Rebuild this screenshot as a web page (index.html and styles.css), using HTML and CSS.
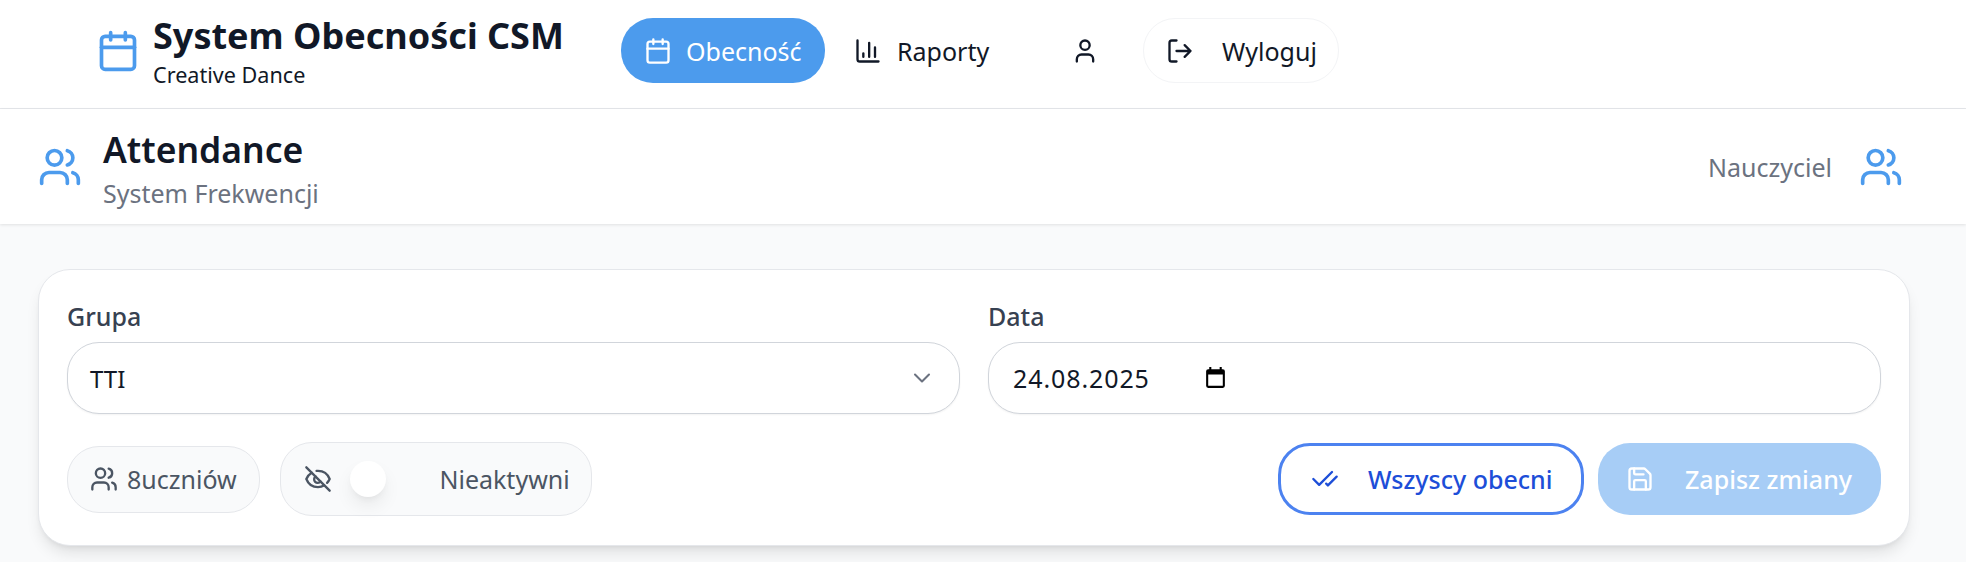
FILE: index.html
```html
<!DOCTYPE html>
<html>
  <head>
    <meta charset="utf-8">
    <title>System Obecności CSM</title>
    <link rel="stylesheet" href="styles.css">
  </head>
  <body>
    <!-- Górna nawigacja -->
    <nav class="navbar">
      <div class="brand">
        <svg class="icon brand-icon" viewBox="0 0 24 24"><path d="M8 2v4M16 2v4"/><rect x="3" y="4" width="18" height="18" rx="2"/><path d="M3 10h18"/></svg>
        <div>
          <div class="brand-title">System Obecności CSM</div>
          <div class="brand-sub">Creative Dance</div>
        </div>
      </div>
      <div class="nav-links">
        <a class="nav-link nav-active">
          <svg class="icon nav-icon" viewBox="0 0 24 24"><path d="M8 2v4M16 2v4"/><rect x="3" y="4" width="18" height="18" rx="2"/><path d="M3 10h18"/></svg>
          Obecność
        </a>
        <a class="nav-link nav-reports">
          <svg class="icon nav-icon" viewBox="0 0 24 24"><path d="M3 3v16a2 2 0 0 0 2 2h16"/><path d="M8 17v-3M13 17V5M18 17V9"/></svg>
          Raporty
        </a>
        <a class="nav-user">
          <svg class="icon nav-icon" viewBox="0 0 24 24"><path d="M19 21v-2a4 4 0 0 0-4-4H9a4 4 0 0 0-4 4v2"/><circle cx="12" cy="7" r="4"/></svg>
        </a>
        <a class="nav-link nav-logout">
          <svg class="icon nav-icon" viewBox="0 0 24 24"><path d="M9 21H5a2 2 0 0 1-2-2V5a2 2 0 0 1 2-2h4"/><path d="M16 17l5-5-5-5M21 12H9"/></svg>
          Wyloguj
        </a>
      </div>
    </nav>

    <!-- Nagłówek strony -->
    <header class="page-header">
      <div class="page-title-group">
        <svg class="icon header-icon" viewBox="0 0 24 24"><path d="M16 21v-2a4 4 0 0 0-4-4H6a4 4 0 0 0-4 4v2"/><circle cx="9" cy="7" r="4"/><path d="M22 21v-2a4 4 0 0 0-3-3.87M16 3.13a4 4 0 0 1 0 7.75"/></svg>
        <div class="page-title-text">
          <h1 class="page-title">Attendance</h1>
          <div class="page-sub">System Frekwencji</div>
        </div>
      </div>
      <div class="role">
        <span>Nauczyciel</span>
        <svg class="icon header-icon" viewBox="0 0 24 24"><path d="M16 21v-2a4 4 0 0 0-4-4H6a4 4 0 0 0-4 4v2"/><circle cx="9" cy="7" r="4"/><path d="M22 21v-2a4 4 0 0 0-3-3.87M16 3.13a4 4 0 0 1 0 7.75"/></svg>
      </div>
    </header>

    <main class="content">
      <section class="card">
        <div class="fields">
          <div class="field">
            <label class="field-label">Grupa</label>
            <div class="field-box field-select">
              <span>TTI</span>
              <svg class="icon chevron" viewBox="0 0 24 24"><path d="M6 9l6 6 6-6"/></svg>
            </div>
          </div>
          <div class="field">
            <label class="field-label">Data</label>
            <div class="field-box field-date">
              <span class="date-value">24.08.2025</span>
              <svg class="date-icon" viewBox="0 0 24 24"><path d="M19 4h-1V2h-2v2H8V2H6v2H5a2 2 0 0 0-2 2v14a2 2 0 0 0 2 2h14a2 2 0 0 0 2-2V6a2 2 0 0 0-2-2zm0 16H5V9h14v11z"/></svg>
            </div>
          </div>
        </div>

        <div class="actions">
          <div class="actions-left">
            <div class="count-pill">
              <svg class="icon pill-icon" viewBox="0 0 24 24"><path d="M16 21v-2a4 4 0 0 0-4-4H6a4 4 0 0 0-4 4v2"/><circle cx="9" cy="7" r="4"/><path d="M22 21v-2a4 4 0 0 0-3-3.87M16 3.13a4 4 0 0 1 0 7.75"/></svg>
              <span>8</span><span>uczniów</span>
            </div>
            <div class="toggle-pill">
              <svg class="icon pill-icon" viewBox="0 0 24 24"><path d="M10.73 5.08A10.4 10.4 0 0 1 12 5c4.5 0 8.3 2.6 10 7a11 11 0 0 1-2.2 3.3"/><path d="M6.6 6.6A11 11 0 0 0 2 12c1.7 4.4 5.5 7 10 7a10.6 10.6 0 0 0 5.4-1.6"/><path d="M9.9 9.9a3 3 0 1 0 4.2 4.2"/><path d="M2 2l20 20"/></svg>
              <span class="toggle-knob"></span>
              <span class="toggle-label">Nieaktywni</span>
            </div>
          </div>
          <div class="actions-right">
            <button class="btn btn-outline">
              <svg class="icon btn-icon" viewBox="0 0 24 24"><path d="M18 6L7 17l-5-5"/><path d="M22 10l-7.5 7.5L13 16"/></svg>
              Wszyscy obecni
            </button>
            <button class="btn btn-save">
              <svg class="icon btn-icon" viewBox="0 0 24 24"><path d="M15.2 3a2 2 0 0 1 1.4.6l3.8 3.8a2 2 0 0 1 .6 1.4V19a2 2 0 0 1-2 2H5a2 2 0 0 1-2-2V5a2 2 0 0 1 2-2z"/><path d="M17 21v-7a1 1 0 0 0-1-1H8a1 1 0 0 0-1 1v7"/><path d="M7 3v4a1 1 0 0 0 1 1h7"/></svg>
              Zapisz zmiany
            </button>
          </div>
        </div>
      </section>
    </main>
  </body>
</html>
```

FILE: styles.css
```css
* {
  box-sizing: border-box;
}

html,
body {
  margin: 0;
  padding: 0;
  height: 100%;
}

body {
  font-family: "Noto Sans", sans-serif;
  background-color: #f9fafb;
  color: #111827;
  overflow: hidden;
}

.icon {
  fill: none;
  stroke: currentColor;
  stroke-width: 2;
  stroke-linecap: round;
  stroke-linejoin: round;
  flex-shrink: 0;
}

/* Nawigacja */
.navbar {
  display: flex;
  align-items: center;
  height: 109px;
  padding-left: 96px;
  background-color: #fff;
  border-bottom: 1px solid #e5e7eb;
}

.brand {
  display: flex;
  align-items: center;
  gap: 13px;
  width: 525px;
}

.brand-icon {
  width: 44px;
  height: 44px;
  margin-top: -6px;
  color: #4c9bed;
}

.brand-title {
  font-size: 36px;
  line-height: 44px;
  font-weight: 700;
  margin-top: -4px;
}

.brand-sub {
  font-size: 21.6px;
  line-height: 32px;
  margin-top: 1px;
}

.nav-links {
  display: flex;
  align-items: center;
  margin-top: -7px;
}

.nav-link {
  display: flex;
  align-items: center;
  gap: 14px;
  height: 65px;
  font-size: 25px;
  border-radius: 32px;
}

.nav-icon {
  width: 28px;
  height: 28px;
}

.nav-active {
  width: 204px;
  padding-left: 23px;
  background-color: #4c9bed;
  color: #fff;
}

.nav-reports {
  width: 204px;
  padding-left: 29px;
  gap: 15px;
}

.nav-user {
  display: flex;
  width: 114px;
  padding-left: 42px;
}

.nav-logout {
  width: 196px;
  padding-left: 22px;
  gap: 28px;
  border: 1px solid #f3f4f6;
}

/* Nagłówek strony */
.page-header {
  display: flex;
  align-items: center;
  justify-content: space-between;
  height: 115px;
  padding: 0 63px 0 38px;
  background-color: #fff;
  box-shadow: 0 1px 3px rgba(0, 0, 0, 0.1);
}

.page-title-group {
  display: flex;
  align-items: center;
  gap: 21px;
}

.page-title-text {
  padding-top: 7px;
}

.header-icon {
  width: 44px;
  height: 44px;
  color: #4c9bed;
}

.page-title {
  margin: 0;
  font-size: 35.5px;
  line-height: 46px;
  font-weight: 600;
}

.page-sub {
  font-size: 25px;
  line-height: 43px;
  color: #6b7280;
}

.role {
  display: flex;
  align-items: center;
  gap: 27px;
  font-size: 25px;
  color: #6b7280;
}

/* Karta */
.content {
  padding: 45px 56px 0 38px;
}

.card {
  height: 277px;
  padding: 28px 28px 0 28px;
  background-color: #fff;
  border: 1px solid #e5e7eb;
  border-radius: 32px;
  box-shadow: 0 10px 15px -3px rgba(0, 0, 0, 0.1), 0 4px 6px -4px rgba(0, 0, 0, 0.1);
}

.fields {
  display: grid;
  grid-template-columns: 1fr 1fr;
  gap: 28px;
}

.field-label {
  display: block;
  margin-bottom: 8px;
  font-size: 25px;
  line-height: 36px;
  font-weight: 500;
  color: #374151;
}

.field-box {
  display: flex;
  align-items: center;
  height: 72px;
  font-size: 25px;
  background-color: #fff;
  border: 1px solid #d1d5db;
  border-radius: 32px;
  box-shadow: 0 1px 2px rgba(0, 0, 0, 0.05);
}

.field-select {
  justify-content: space-between;
  padding: 0 23px 0 22px;
  font-size: 24px;
}

.field-date {
  padding: 0 24px;
}

.chevron {
  width: 28px;
  height: 28px;
  stroke-width: 1.75;
  color: #6b7280;
}

.date-value {
  letter-spacing: 0.9px;
}

.date-icon {
  width: 25px;
  height: 25px;
  margin-left: 53px;
  margin-top: -2px;
  fill: #000;
}

.actions {
  display: flex;
  align-items: center;
  justify-content: space-between;
  margin-top: 28px;
}

.actions-left,
.actions-right {
  display: flex;
  align-items: center;
}

.actions-left {
  gap: 20px;
}

.actions-right {
  gap: 14px;
}

.count-pill {
  display: flex;
  align-items: center;
  height: 67px;
  padding: 0 22px;
  font-size: 25px;
  color: #4b5563;
  background-color: #f9fafb;
  border: 1px solid #e5e7eb;
  border-radius: 32px;
}

.pill-icon {
  width: 28px;
  height: 28px;
  margin-right: 9px;
}

.toggle-pill {
  display: flex;
  align-items: center;
  width: 312px;
  height: 74px;
  padding: 0 21px 0 23px;
  font-size: 25px;
  color: #4b5563;
  background-color: #f9fafb;
  border: 1px solid #e5e7eb;
  border-radius: 32px;
}

.toggle-knob {
  width: 36px;
  height: 36px;
  margin-left: 9px;
  background-color: #fff;
  border-radius: 50%;
  box-shadow: 0 10px 20px -3px rgba(0, 0, 0, 0.09), 0 4px 8px -4px rgba(0, 0, 0, 0.08);
}

.toggle-label {
  margin-left: auto;
}

.btn {
  display: flex;
  align-items: center;
  height: 72px;
  font-family: inherit;
  font-size: 25px;
  font-weight: 500;
  border-radius: 32px;
  cursor: pointer;
}

.btn-icon {
  width: 28px;
  height: 28px;
}

.btn-outline {
  width: 306px;
  padding: 0 0 0 30px;
  gap: 29px;
  color: #1d4ed8;
  background-color: #fff;
  border: 3px solid #4c82f0;
}

.btn-save {
  width: 283px;
  padding: 0 0 0 28px;
  gap: 31px;
  color: #fff;
  background-color: #a7cdf6;
  border: none;
}
```
